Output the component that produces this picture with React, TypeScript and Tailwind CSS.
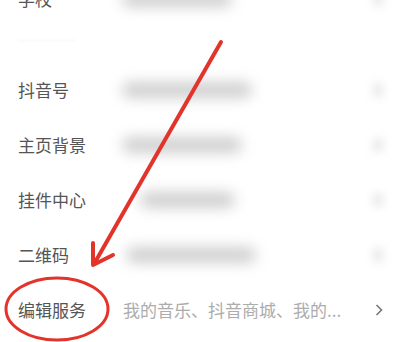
import React from 'react'

const rows = [
  { label: '抖音号', blob: 'ml-[2px] w-[130px]' },
  { label: '主页背景', blob: 'ml-[2px] w-[120px]' },
  { label: '挂件中心', blob: 'ml-[20px] w-[95px]' },
  { label: '二维码', blob: 'ml-[6px] w-[130px]' },
]

function BlurRow({ label, blob }: { label: string; blob: string }) {
  return (
    <div className="flex h-[55px] items-center pl-[18px] pr-[16px]">
      <span className="w-[102px] shrink-0 text-[17px] text-[#555]">{label}</span>
      <div className={`h-[16px] rounded-full bg-[#cfcfcf] blur-[7px] ${blob}`} />
      <div className="ml-auto h-[16px] w-[12px] rounded-full bg-[#ececec] blur-[4px]" />
    </div>
  )
}

export default function App() {
  return (
    <div
      className="relative h-[342px] w-[400px] overflow-hidden bg-white"
      style={{ fontFamily: '"Noto Sans CJK SC", "Noto Sans", sans-serif' }}
    >
      <div className="flex flex-col">
        <div className="-mt-[29px] flex h-[55px] items-center pl-[18px] pr-[16px]">
          <span className="w-[102px] shrink-0 text-[17px] text-[#555]">学校</span>
          <div className="ml-[2px] h-[16px] w-[110px] rounded-full bg-[#cfcfcf] blur-[7px]" />
          <div className="ml-auto h-[16px] w-[12px] rounded-full bg-[#ececec] blur-[4px]" />
        </div>
        <div className="flex h-[36px] items-start pl-[18px]">
          <div className="mt-[14px] h-[1px] w-[58px] bg-[#f3f3f3] blur-[1px]" />
        </div>
        {rows.map((r) => (
          <BlurRow key={r.label} label={r.label} blob={r.blob} />
        ))}
        <div className="flex h-[55px] items-center pl-[18px] pr-[16px]">
          <span className="w-[105px] shrink-0 text-[17px] text-[#555]">编辑服务</span>
          <span className="whitespace-nowrap text-[17px] text-[#acacac]">我的音乐、抖音商城、我的...</span>
          <svg className="ml-auto shrink-0" width="10" height="14" viewBox="0 0 10 14">
            <path d="M2.5 2 L7.5 7 L2.5 12" fill="none" stroke="#777" strokeWidth="1.6" />
          </svg>
        </div>
      </div>
      <svg className="pointer-events-none absolute inset-0" width="400" height="342" viewBox="0 0 400 342">
        <g stroke="#e3342c" strokeLinecap="round" fill="none">
          <line x1="221" y1="42" x2="94" y2="264" strokeWidth="4" />
          <path d="M93 243 L93 265 L113 255" strokeWidth="4" strokeLinejoin="round" />
          <ellipse cx="57" cy="309" rx="51" ry="31" strokeWidth="3" />
        </g>
      </svg>
    </div>
  )
}
